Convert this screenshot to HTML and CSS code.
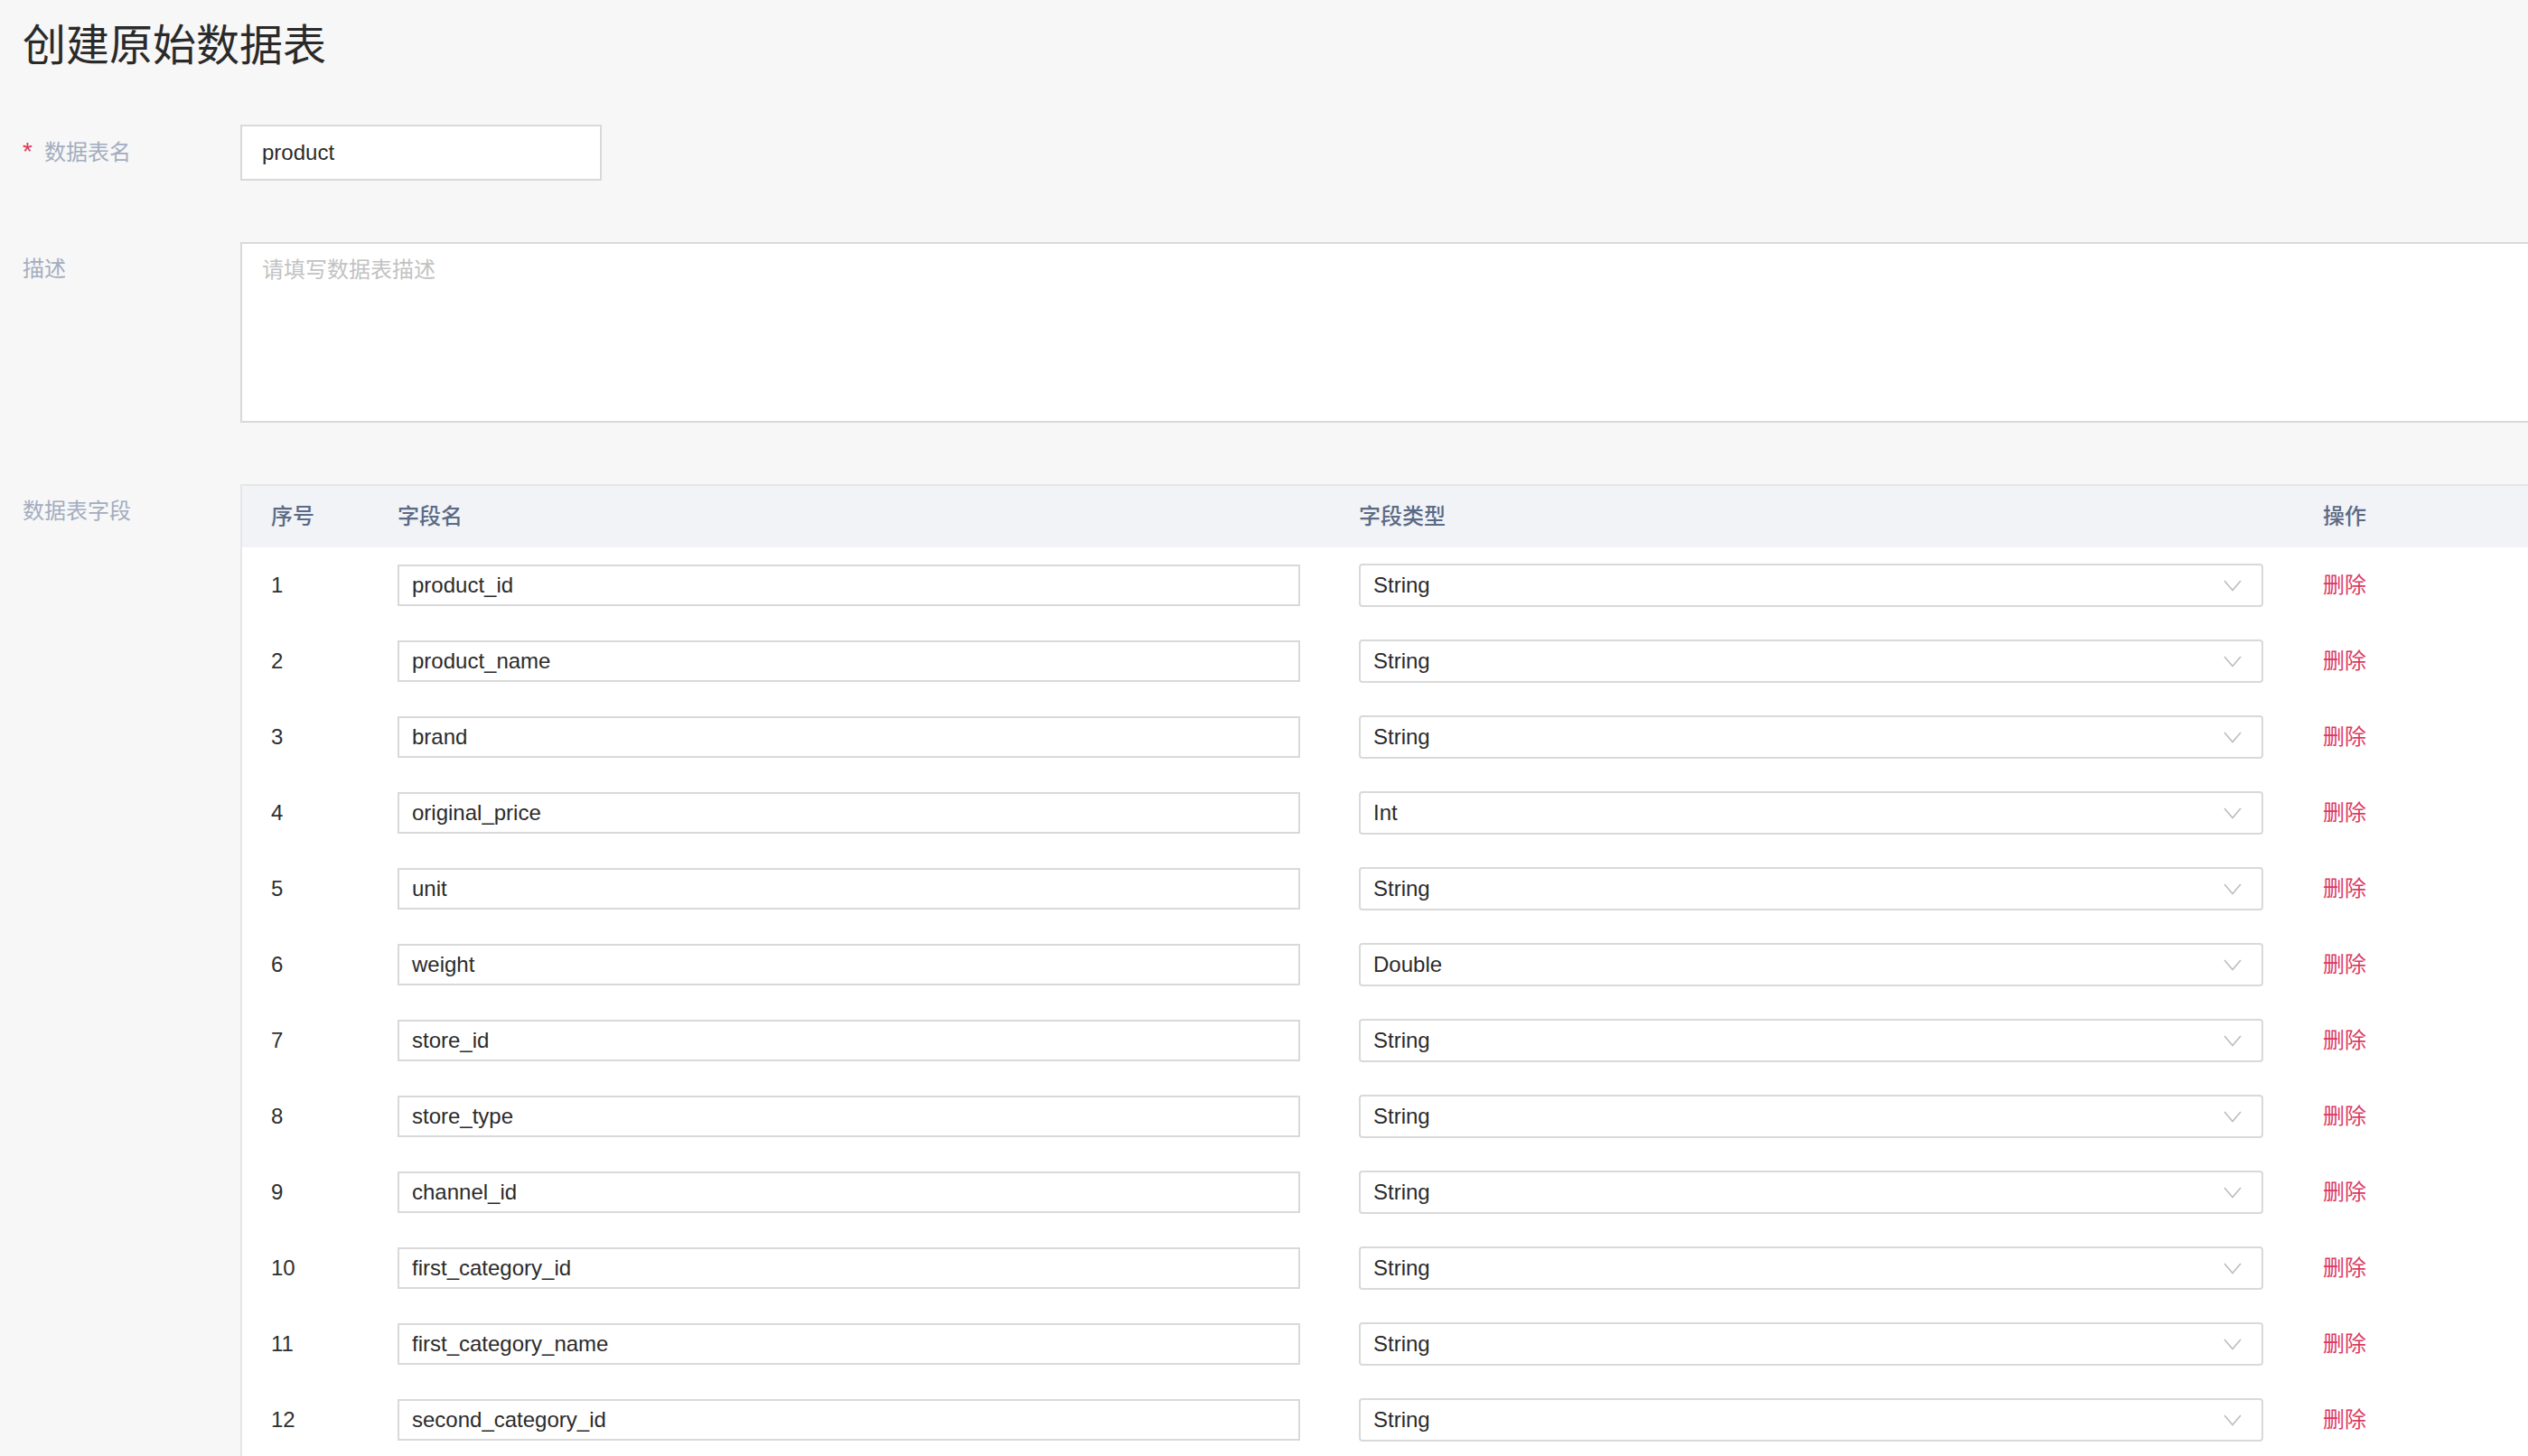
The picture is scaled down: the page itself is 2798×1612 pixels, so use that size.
FILE: index.html
```html
<!DOCTYPE html>
<html lang="zh-CN">
<head>
<meta charset="utf-8">
<title>创建原始数据表</title>
<link rel="stylesheet" href="styles.css">
</head>
<body>
<h1 class="page-title">创建原始数据表</h1>
<div class="form">
  <div class="form-row">
    <label class="form-label"><span class="req">*</span>数据表名</label>
    <div class="text-input name-input">product</div>
  </div>
  <div class="form-row gap">
    <label class="form-label">描述</label>
    <div class="textarea"><span class="placeholder">请填写数据表描述</span></div>
  </div>
  <div class="form-row gap">
    <label class="form-label">数据表字段</label>
    <div class="table">
      <div class="thead">
        <div class="cell">序号</div>
        <div class="cell">字段名</div>
        <div class="cell">字段类型</div>
        <div class="cell">操作</div>
      </div>
      <div class="tbody" id="rows"></div>
    </div>
  </div>
</div>
<script src="app.js"></script>
</body>
</html>
```
FILE: styles.css
```css
html, body {
  overflow: hidden;
}
body {
  margin: 0;
  padding: 0 0 0 25px;
  background: #f7f7f7;
  font-family: "Liberation Sans", "Noto Sans CJK SC", sans-serif;
  font-size: 24px;
  color: #2f2f2f;
  width: 3200px;
}
.page-title {
  margin: 0;
  padding-top: 27px;
  font-size: 48px;
  line-height: 48px;
  font-weight: 400;
  color: #2a2a2a;
}
.form {
  margin-top: 63px;
}
.form-row {
  display: flex;
  align-items: flex-start;
}
.form-row.gap {
  margin-top: 68px;
}
.form-label {
  width: 241px;
  flex: none;
  padding-top: 18px;
  line-height: 24px;
  color: #a3adbf;
}
.req {
  color: #e0375f;
  font-size: 28px;
  margin-right: 13px;
}
.text-input {
  box-sizing: border-box;
  background: #fff;
  border: 2px solid #d9d9d9;
  display: flex;
  align-items: center;
  padding-left: 22px;
  line-height: 24px;
  color: #2b2b2b;
}
.name-input {
  width: 400px;
  height: 62px;
}
.textarea {
  box-sizing: border-box;
  width: 2700px;
  height: 200px;
  background: #fff;
  border: 2px solid #d9d9d9;
  padding: 17px 22px;
  line-height: 24px;
}
.placeholder {
  color: #c2c2c2;
}
.table {
  width: 2700px;
  border-top: 2px solid #e6e6e6;
  border-left: 2px solid #e6e6e6;
  background: #fff;
}
.thead, .trow {
  display: grid;
  grid-template-columns: 140px 1064px 1067px 1fr;
  align-items: center;
}
.thead {
  height: 68px;
  background: #f1f3f7;
  color: #5b6a85;
  font-weight: 500;
}
.cell {
  padding-left: 32px;
  line-height: 24px;
}
.trow {
  height: 84px;
}
.field-input {
  width: 999px;
  height: 46px;
  padding-left: 14px;
}
.select {
  box-sizing: border-box;
  width: 1001px;
  height: 48px;
  background: #fff;
  border: 2px solid #d9d9d9;
  border-radius: 4px;
  display: flex;
  align-items: center;
  justify-content: space-between;
  padding: 0 22px 0 14px;
  color: #2b2b2b;
}
.chevron {
  width: 20px;
  height: 14px;
  display: block;
}
.del {
  color: #dc3a62;
}
```
FILE: app.js
```js
var fields = [
  ["product_id", "String"],
  ["product_name", "String"],
  ["brand", "String"],
  ["original_price", "Int"],
  ["unit", "String"],
  ["weight", "Double"],
  ["store_id", "String"],
  ["store_type", "String"],
  ["channel_id", "String"],
  ["first_category_id", "String"],
  ["first_category_name", "String"],
  ["second_category_id", "String"]
];
var html = "";
fields.forEach(function (f, i) {
  html += '<div class="trow">' +
    '<div class="cell">' + (i + 1) + '</div>' +
    '<div class="cell"><div class="text-input field-input">' + f[0] + '</div></div>' +
    '<div class="cell"><div class="select"><span>' + f[1] + '</span>' +
    '<svg class="chevron" viewBox="0 0 20 14"><polyline points="1,2 10,12.5 19,2" fill="none" stroke="#bdbdbd" stroke-width="1.6"/></svg>' +
    '</div></div>' +
    '<div class="cell del">删除</div>' +
    '</div>';
});
document.getElementById("rows").innerHTML = html;
```
